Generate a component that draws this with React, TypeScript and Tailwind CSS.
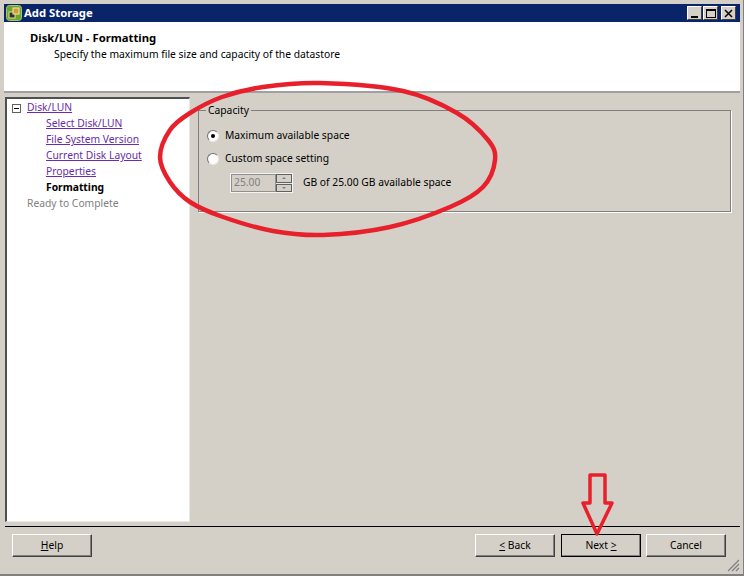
import React from "react";

const font = { fontFamily: '"Noto Sans", Tahoma, sans-serif' };

type BtnProps = {
  children: React.ReactNode;
  focused?: boolean;
  className?: string;
};

// classic raised win2k button
function Btn({ children, focused, className }: BtnProps) {
  return (
    <button
      type="button"
      className={`w-20 h-[23px] shrink-0 bg-[#d4d0c8] text-[10.3px] text-black flex items-center justify-center border border-t-white border-l-white border-r-[#404040] border-b-[#404040] shadow-[inset_-1px_-1px_0_#808080] ${
        focused ? "outline outline-1 -outline-offset-1 outline-black" : ""
      } ${className ?? ""}`}
    >
      {children}
    </button>
  );
}

function TitleBtn({ children, className }: { children: React.ReactNode; className?: string }) {
  return (
    <div
      className={`w-[15px] h-[14px] bg-[#d4d0c8] border border-t-white border-l-white border-r-[#404040] border-b-[#404040] flex items-center justify-center ${className ?? ""}`}
    >
      {children}
    </div>
  );
}

function Radio({ checked }: { checked?: boolean }) {
  return (
    <span className="w-3 h-3 rounded-full bg-white border border-t-[#707070] border-l-[#707070] border-r-[#e8e8e8] border-b-[#e8e8e8] flex items-center justify-center shrink-0">
      {checked && <span className="w-1 h-1 rounded-full bg-black" />}
    </span>
  );
}

const links = ["Select Disk/LUN", "File System Version", "Current Disk Layout", "Properties"];

// points traced off the hand drawn circle
const loop: [number, number][] = [
  [160, 157], [170, 130], [190, 113], [222, 97], [263, 87], [320, 83], [403, 91], [457, 113],
  [488, 140], [495, 160], [483, 187], [450, 207], [390, 227], [323, 235], [273, 231], [223, 217],
  [190, 202], [170, 182],
];

function smooth(pts: [number, number][]) {
  const n = pts.length;
  let d = `M${pts[0][0]} ${pts[0][1]}`;
  for (let i = 0; i < n; i++) {
    const p0 = pts[(i - 1 + n) % n];
    const p1 = pts[i];
    const p2 = pts[(i + 1) % n];
    const p3 = pts[(i + 2) % n];
    const c1x = p1[0] + (p2[0] - p0[0]) / 6;
    const c1y = p1[1] + (p2[1] - p0[1]) / 6;
    const c2x = p2[0] - (p3[0] - p1[0]) / 6;
    const c2y = p2[1] - (p3[1] - p1[1]) / 6;
    d += ` C${c1x} ${c1y} ${c2x} ${c2y} ${p2[0]} ${p2[1]}`;
  }
  return d + " Z";
}

export default function App() {
  return (
    <div
      style={font}
      className="relative w-[744px] h-[576px] overflow-hidden bg-[#d4d0c8] text-black flex flex-col pt-1 pl-1 pr-[3px] pb-1 border-b-2 border-r border-[#808080] text-[10.3px]"
    >
      {/* title bar */}
      <div className="h-[18px] shrink-0 bg-[#0a246a] flex items-center pl-[2px] pr-[4px] gap-[2px]">
        <svg width="16" height="16" viewBox="0 0 16 16" className="shrink-0">
          <rect x="0.5" y="0.5" width="15" height="15" rx="3" fill="#6fa52f" stroke="#a5c96a" />
          <rect x="3" y="7" width="6" height="6" fill="#2a3a20" stroke="#e8d9a0" />
          <rect x="7" y="3" width="6" height="6" fill="#d89a2a" stroke="#f0e6c0" />
        </svg>
        <div className="text-white font-bold text-[11.3px]">Add Storage</div>
        <div className="ml-auto flex items-center">
          <TitleBtn>
            <div className="w-[7px] h-[2px] bg-black mt-[7px]" />
          </TitleBtn>
          <TitleBtn className="ml-[1px]">
            <div className="w-[10px] h-[9px] border border-t-2 border-black" />
          </TitleBtn>
          <TitleBtn className="ml-[3px]">
            <svg width="9" height="9" viewBox="0 0 9 9">
              <path d="M1 1 L8 8 M8 1 L1 8" stroke="#000" strokeWidth="1.5" />
            </svg>
          </TitleBtn>
        </div>
      </div>

      {/* header */}
      <div className="h-[71px] shrink-0 bg-white border-b-2 border-[#a0a0a0] pl-[26px] pt-[9px]">
        <div className="font-bold text-[11.3px] leading-[14px]">Disk/LUN - Formatting</div>
        <div className="pl-6 mt-[2px] leading-[14px]">Specify the maximum file size and capacity of the datastore</div>
      </div>

      {/* body */}
      <div className="flex-1 flex min-h-0 pt-[4px] pr-[9px]">
        <div className="w-[185px] ml-[1px] shrink-0 bg-white border border-t-2 border-l-2 border-t-[#505050] border-l-[#505050] border-r-[#e8e8e8] border-b-[#e8e8e8] pt-[1px]">
          <div className="h-4 flex items-center pl-[5px]">
            <span className="w-[9px] h-[9px] border border-[#606060] flex items-center justify-center mr-[6px]">
              <span className="w-[5px] h-px bg-black" />
            </span>
            <span className="text-[#6a2ca8] underline">Disk/LUN</span>
          </div>
          {links.map((l) => (
            <div key={l} className="h-4 flex items-center pl-[39px]">
              <span className="text-[#6a2ca8] underline">{l}</span>
            </div>
          ))}
          <div className="h-4 flex items-center pl-[39px] font-bold">Formatting</div>
          <div className="h-4 flex items-center pl-[20px] text-[#808080]">Ready to Complete</div>
        </div>

        <div className="flex-1 pl-[8px] pt-[6px]">
          <fieldset className="h-[109px] border border-[#808080] shadow-[1px_1px_0_#fff] pl-[7px]">
            <legend className="px-[2px] leading-[14px]">Capacity</legend>
            <div className="flex items-center gap-[6px] h-4 mt-[11px] ml-px">
              <Radio checked />
              <span>Maximum available space</span>
            </div>
            <div className="flex items-center gap-[6px] h-4 mt-[7px] ml-px">
              <Radio />
              <span>Custom space setting</span>
            </div>
            <div className="flex items-center mt-[6px] ml-[24px]">
              <div className="w-[63px] h-5 bg-[#e8e8e8] border border-[#f4f4f4] flex items-stretch">
                <div className="flex-1 bg-[#d4d0c8] border border-[#909090] text-[#808080] pl-[2px] flex items-center">25.00</div>
                <div className="w-4 flex flex-col gap-px">
                  <div className="flex-1 bg-[#d4d0c8] border border-[#606060] flex items-center justify-center">
                    <span className="w-0 h-0 border-x-[2px] border-x-transparent border-b-[2px] border-b-[#808080]" />
                  </div>
                  <div className="flex-1 bg-[#d4d0c8] border border-[#606060] flex items-center justify-center">
                    <span className="w-0 h-0 border-x-[2px] border-x-transparent border-t-[2px] border-t-[#808080]" />
                  </div>
                </div>
              </div>
              <span className="ml-[10px]">GB of 25.00 GB available space</span>
            </div>
          </fieldset>
        </div>
      </div>

      {/* footer */}
      <div className="shrink-0 h-[44px] mt-[4px] ml-[1px] border-t border-t-black flex items-start pt-[7px] pl-[7px] pr-[14px]">
        <Btn>
          <span>
            <span className="underline">H</span>elp
          </span>
        </Btn>
        <Btn className="ml-auto">
          <span>
            <span className="underline">&lt;</span> Back
          </span>
        </Btn>
        <Btn focused className="ml-[6px]">
          <span>
            Next <span className="underline">&gt;</span>
          </span>
        </Btn>
        <Btn className="ml-[5px]">Cancel</Btn>
      </div>

      {/* resize grip */}
      <svg width="14" height="14" viewBox="0 0 14 14" className="absolute right-[3px] bottom-[2px]">
        <path d="M13 2 L2 13 M13 6 L6 13 M13 10 L10 13" stroke="#808080" strokeWidth="1.2" />
      </svg>

      {/* hand drawn annotations */}
      <svg width="744" height="576" viewBox="0 0 744 576" className="absolute left-0 top-0 pointer-events-none">
        <path d={smooth(loop)} fill="none" stroke="#e8202c" strokeWidth="4.5" />
        <path
          d="M590 475 H605 V503 H612 L597 534 L583 503 H590 Z"
          fill="none"
          stroke="#e8202c"
          strokeWidth="3.5"
          strokeLinejoin="round"
        />
      </svg>
    </div>
  );
}
